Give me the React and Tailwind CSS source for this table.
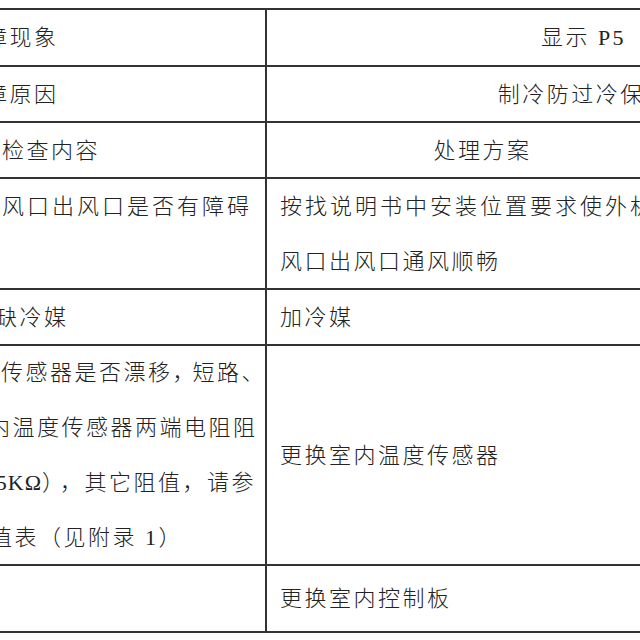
import React from "react";

const font = "font-['Liberation_Serif','Noto_Sans_CJK_SC',serif]";

const Line = ({ children, className = "" }) => (
  <div className={`h-[55px] leading-[55px] whitespace-nowrap ${className}`}>{children}</div>
);

const Punct = ({ children }) => <span className="tracking-[-6px] mr-[4px]">{children}</span>;

const Row = ({ h, left, right, rightClass = "", last = false }) => (
  <div className={`flex border-t-2 border-[#333] ${last ? "border-b-2" : ""} ${h}`}>
    <div className="w-[267px] shrink-0 border-r-2 border-[#333] overflow-hidden flex flex-col justify-center">
      {left}
    </div>
    <div className={`flex-1 flex flex-col justify-center ${rightClass}`}>{right}</div>
  </div>
);

export default function App() {
  return (
    <div className={`w-[640px] h-[640px] overflow-hidden bg-white text-[#222] text-[22px] tracking-[2.5px] font-light ${font}`}>
      <div className="w-[900px] mt-[8px]">
        <Row
          h="h-[57px]"
          left={<Line className="ml-[-15px]">障现象</Line>}
          right={<Line className="text-center">显示 P5</Line>}
        />
        <Row
          h="h-[56px]"
          left={<Line className="ml-[-15px]">障原因</Line>}
          right={<Line className="text-center">制冷防过冷保护</Line>}
        />
        <Row
          h="h-[56px]"
          left={<Line className="ml-[2px]">检查内容</Line>}
          right={<Line className="w-[431px] text-center">处理方案</Line>}
        />
        <Row
          h="h-[111px]"
          left={
            <>
              <Line className="ml-[2px] tracking-[3px]">风口出风口是否有障碍</Line>
              <Line />
            </>
          }
          right={
            <>
              <Line className="pl-[13px] tracking-[3px]">按找说明书中安装位置要求使外机进</Line>
              <Line className="pl-[13px]">风口出风口通风顺畅</Line>
            </>
          }
        />
        <Row
          h="h-[56px]"
          left={<Line className="ml-[-5px]">缺冷媒</Line>}
          right={<Line className="pl-[13px]">加冷媒</Line>}
        />
        <Row
          h="h-[220px]"
          left={
            <>
              <Line className="ml-[1px]">
                传感器是否漂移<Punct>，</Punct>短路<Punct>、</Punct>
              </Line>
              <Line className="ml-[-12px]">内温度传感器两端电阻阻</Line>
              <Line className="flex [text-spacing-trim:space-all]">
                <span className="w-[42px] shrink-0 flex justify-end tracking-[1px]">（25KΩ</span>
                <span className="tracking-[-4px]">）</span>
                <span>，其它阻值，请参</span>
              </Line>
              <Line className="ml-[-10px]">值表（见附录 1）</Line>
            </>
          }
          right={<Line className="pl-[13px]">更换室内温度传感器</Line>}
        />
        <Row
          h="h-[69px]"
          last
          left={<Line />}
          right={<Line className="pl-[13px]">更换室内控制板</Line>}
        />
      </div>
    </div>
  );
}
